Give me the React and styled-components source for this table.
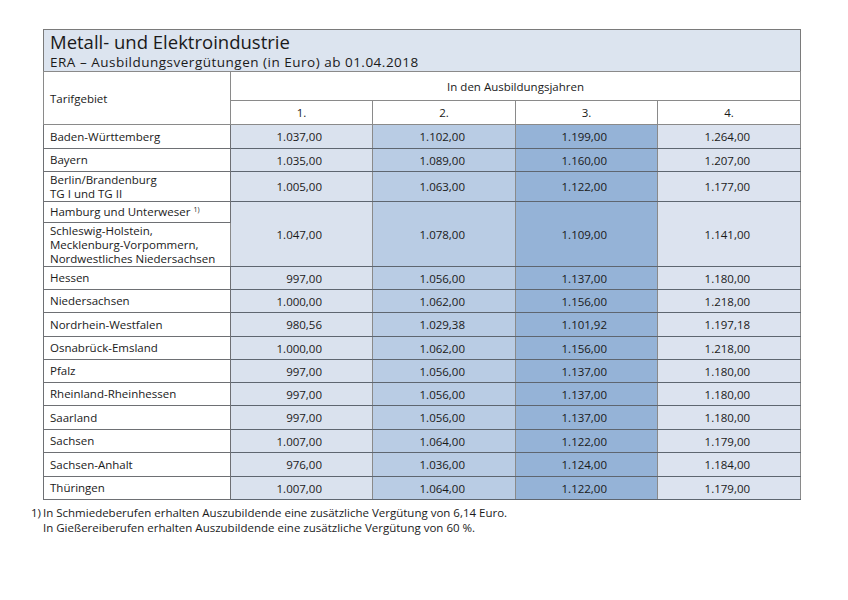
import React from 'react'
import styled, { createGlobalStyle } from 'styled-components';

const GlobalStyle = createGlobalStyle`
    body {
        margin: 0;
        background: #ffffff;
        font-family: "Open Sans", "DejaVu Sans", sans-serif;
        color: #1a1a1a;
    }
`;

// Hintergrundfarben der Jahresspalten
const colColors = ['#ffffff', '#dae2ee', '#b9cce4', '#95b3d7', '#dce3ef'];

const rows = [
    { name: 'Baden-Württemberg', h: 23, v: ['1.037,00', '1.102,00', '1.199,00', '1.264,00'] },
    { name: 'Bayern', h: 22, v: ['1.035,00', '1.089,00', '1.160,00', '1.207,00'] },
    { name: ['Berlin/Brandenburg', 'TG I und TG II'], h: 29, v: ['1.005,00', '1.063,00', '1.122,00', '1.177,00'] },
    { name: 'Hessen', h: 22, v: ['997,00', '1.056,00', '1.137,00', '1.180,00'] },
    { name: 'Niedersachsen', h: 22, v: ['1.000,00', '1.062,00', '1.156,00', '1.218,00'] },
    { name: 'Nordrhein-Westfalen', h: 23, v: ['980,56', '1.029,38', '1.101,92', '1.197,18'] },
    { name: 'Osnabrück-Emsland', h: 22, v: ['1.000,00', '1.062,00', '1.156,00', '1.218,00'] },
    { name: 'Pfalz', h: 22, v: ['997,00', '1.056,00', '1.137,00', '1.180,00'] },
    { name: 'Rheinland-Rheinhessen', h: 22, v: ['997,00', '1.056,00', '1.137,00', '1.180,00'] },
    { name: 'Saarland', h: 23, v: ['997,00', '1.056,00', '1.137,00', '1.180,00'] },
    { name: 'Sachsen', h: 22, v: ['1.007,00', '1.064,00', '1.122,00', '1.179,00'] },
    { name: 'Sachsen-Anhalt', h: 23, v: ['976,00', '1.036,00', '1.124,00', '1.184,00'] },
    { name: 'Thüringen', h: 22, v: ['1.007,00', '1.064,00', '1.122,00', '1.179,00'] },
];

const merged = {
    top: 'Hamburg und Unterweser',
    bottom: ['Schleswig-Holstein,', 'Mecklenburg-Vorpommern,', 'Nordwestliches Niedersachsen'],
    v: ['1.047,00', '1.078,00', '1.109,00', '1.141,00'],
};

function Label({ name }) {
    if (Array.isArray(name)) {
        return name.map((line) => <Line key={line}>{line}</Line>);
    }
    return name;
}

function DataRow({ row }) {
    return (
        <tr>
            <NameCell $h={row.h}><Label name={row.name} /></NameCell>
            {row.v.map((val, i) => <NumCell key={i} $col={i + 1}>{val}</NumCell>)}
        </tr>
    );
}

function App() {
    const [first, second, third, ...rest] = rows;

    return (
        <Page>
            <GlobalStyle />
            <Table>
                <colgroup>
                    <col style={{ width: 187 }} />
                    <col style={{ width: 142 }} />
                    <col style={{ width: 143 }} />
                    <col style={{ width: 142 }} />
                    <col style={{ width: 143 }} />
                </colgroup>
                <thead>
                    <tr>
                        <TitleCell colSpan={5}>
                            <Title>Metall- und Elektroindustrie</Title>
                            <Subtitle>ERA – Ausbildungsvergütungen (in Euro) ab 01.04.2018</Subtitle>
                        </TitleCell>
                    </tr>
                    <tr>
                        <HeadCell rowSpan={2}>Tarifgebiet</HeadCell>
                        <HeadCell colSpan={4} $center $h={28}>In den Ausbildungsjahren</HeadCell>
                    </tr>
                    <tr>
                        {['1.', '2.', '3.', '4.'].map((y) => <HeadCell key={y} $center $h={23}>{y}</HeadCell>)}
                    </tr>
                </thead>
                <tbody>
                    <DataRow row={first} />
                    <DataRow row={second} />
                    <DataRow row={third} />
                    <tr>
                        <NameCell $h={20}>
                            {merged.top} <Sup>1)</Sup>
                        </NameCell>
                        {merged.v.map((val, i) => <NumCell key={i} rowSpan={2} $col={i + 1}>{val}</NumCell>)}
                    </tr>
                    <tr>
                        <NameCell $h={43}><Label name={merged.bottom} /></NameCell>
                    </tr>
                    {rest.map((row) => <DataRow key={row.name} row={row} />)}
                </tbody>
            </Table>
            <Footnote>
                <FootMark>1)</FootMark>
                <FootText>
                    <Line>In Schmiedeberufen erhalten Auszubildende eine zusätzliche Vergütung von 6,14 Euro.</Line>
                    <Line>In Gießereiberufen erhalten Auszubildende eine zusätzliche Vergütung von 60 %.</Line>
                </FootText>
            </Footnote>
        </Page>
    );
}

export default App;


const Page = styled.div`
    width: 848px;
    height: 600px;
    padding: 29px 0 0 43px;
    box-sizing: border-box;
`;

const Table = styled.table`
    width: 758px;
    table-layout: fixed;
    border-collapse: collapse;
    border: 1px solid #7a7a7a;
    font-size: 11.5px;
`;

const TitleCell = styled.td`
    height: 40px;
    padding: 1px 6px 0 6px;
    background: #dce4ef;
    border-bottom: 1px solid #8a8a8a;
    vertical-align: top;
`;

const Title = styled.div`
    font-size: 18.5px;
    line-height: 22px;
    color: #1a1a1a;
`;

const Subtitle = styled.div`
    font-size: 13.5px;
    line-height: 18px;
    letter-spacing: 0.5px;
    color: #1a1a1a;
`;

const HeadCell = styled.td`
    height: ${(p) => (p.$h ? `${p.$h}px` : 'auto')};
    padding: 0 6px;
    background: #ffffff;
    border: 1px solid #8a8a8a;
    text-align: ${(p) => (p.$center ? 'center' : 'left')};
    vertical-align: middle;
    white-space: nowrap;
`;

const NameCell = styled.td`
    height: ${(p) => p.$h}px;
    padding: 0 6px;
    background: #ffffff;
    border: 1px solid #6e7074;
    line-height: 14px;
    vertical-align: middle;
    white-space: nowrap;
`;

const NumCell = styled.td`
    padding: 0 50px 0 0;
    background: ${(p) => colColors[p.$col]};
    border-top: 1px solid #5e6670;
    border-bottom: 1px solid #5e6670;
    border-left: 1px solid #8a8a8a;
    border-right: 1px solid #8a8a8a;
    text-align: right;
    vertical-align: middle;
    white-space: nowrap;
`;

const Line = styled.div`
    line-height: 14px;
`;

const Sup = styled.sup`
    font-size: 7px;
    vertical-align: 4px;
    line-height: 0;
`;

const Footnote = styled.div`
    display: flex;
    margin: 6px 0 0 -12px;
    font-size: 11.5px;
    color: #1a1a1a;
`;

const FootMark = styled.div`
    width: 12px;
    line-height: 14px;
`;

const FootText = styled.div`
    display: flex;
    flex-direction: column;
    gap: 1px;
`;
